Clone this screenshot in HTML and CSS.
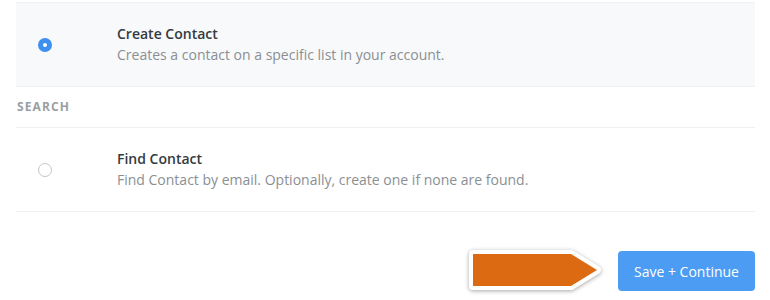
FILE: index.html
```html
<!DOCTYPE html>
<html>
<head>
<meta charset="utf-8">
<link rel="stylesheet" href="styles.css">
</head>
<body>
<div class="page">
  <div class="list">
    <div class="row selected">
      <span class="radio checked"></span>
      <div class="text">
        <div class="title">Create Contact</div>
        <div class="desc">Creates a contact on a specific list in your account.</div>
      </div>
    </div>
    <div class="section">SEARCH</div>
    <div class="row">
      <span class="radio"></span>
      <div class="text">
        <div class="title">Find Contact</div>
        <div class="desc">Find Contact by email. Optionally, create one if none are found.</div>
      </div>
    </div>
  </div>
  <div class="footer">
    <svg class="pointer" width="140" height="46" viewBox="0 0 140 46">
      <polygon points="6,6 104,6 130,22 104,38 6,38" fill="#ffffff" stroke="#ffffff" stroke-width="8" stroke-linejoin="round"/>
      <polygon points="6,6 104,6 130,22 104,38 6,38" fill="#dc6a12"/>
    </svg>
    <button class="btn">Save + Continue</button>
  </div>
</div>
</body>
</html>
```
FILE: styles.css
```css
html, body {
  margin: 0;
  padding: 0;
  background: #ffffff;
}
.page {
  width: 770px;
  height: 300px;
  font-family: "Open Sans", "Noto Sans", sans-serif;
  padding-top: 2px;
  box-sizing: border-box;
}
.list {
  margin-left: 16px;
  width: 739px;
  border-top: 1px solid #eef0f1;
}
.row {
  display: flex;
  align-items: center;
  height: 83px;
  border-bottom: 1px solid #eef0f1;
}
.row.selected {
  background: #f8f9fb;
}
.radio {
  box-sizing: border-box;
  width: 14px;
  height: 14px;
  border-radius: 50%;
  border: 1px solid #c4c4c4;
  background: #fff;
  margin-left: 22px;
  flex: none;
}
.radio.checked {
  border: 5px solid #3d8ff0;
  background: #ffffff;
}
.text {
  margin-left: 65px;
}
.title {
  font-size: 14px;
  font-weight: 600;
  color: #333a40;
  line-height: 20px;
}
.desc {
  font-size: 14px;
  color: #8a8f94;
  line-height: 22px;
}
.section {
  height: 40px;
  line-height: 40px;
  font-size: 12px;
  font-weight: 700;
  letter-spacing: 1.1px;
  color: #999ea3;
  border-bottom: 1px solid #eef0f1;
  padding-left: 1px;
}
.footer {
  display: flex;
  justify-content: flex-end;
  align-items: center;
  gap: 11px;
  width: 755px;
  margin-top: 36px;
}
.pointer {
  filter: drop-shadow(0 1px 2px rgba(0, 0, 0, 0.35));
}
.btn {
  width: 137px;
  height: 40px;
  border: none;
  border-radius: 4px;
  background: #4b9cf2;
  color: #ffffff;
  font-family: "Open Sans", "Noto Sans", sans-serif;
  font-size: 14px;
  padding: 0;
}
```
